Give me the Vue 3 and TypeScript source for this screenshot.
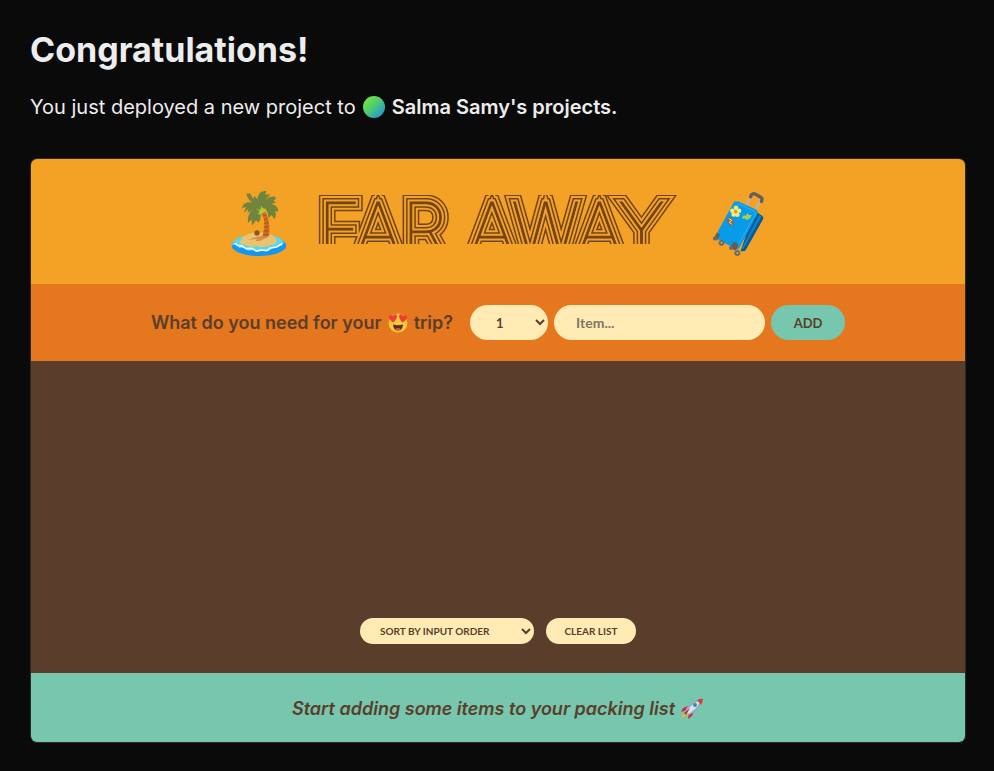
<script setup lang="ts">
import { ref } from 'vue'

interface Layer {
  width: number
  tone: 'ink' | 'ground'
}

// Concentric outlines, widest first, that give the title its neon-tube stripes.
const layers: Layer[] = [
  { width: 15, tone: 'ink' },
  { width: 12, tone: 'ground' },
  { width: 8, tone: 'ink' },
  { width: 5, tone: 'ground' },
  { width: 1, tone: 'ink' },
]

const quantities: number[] = Array.from({ length: 20 }, (_, i) => i + 1)
const quantity = ref<number>(1)
const description = ref<string>('')
const sortBy = ref<string>('input')
</script>

<template>
  <main class="page">
    <h1 class="title">Congratulations!</h1>
    <p class="lead">
      You just deployed a new project to
      <span class="avatar" aria-hidden="true"></span>
      <strong>Salma Samy's projects.</strong>
    </p>

    <section class="preview">
      <header class="banner">
        <svg class="palm" viewBox="24 18 166 198" aria-hidden="true">
          <ellipse cx="107" cy="182" rx="82" ry="31" fill="#1697ee" />
          <path d="M29 174q5-16 33-21h92q24 7 28 21l-9 8q-5-2-9 5l-16 3-10 7-19-2-12 5-14-5-18 2-12-8-16-1-9-8-14 1z" fill="#55d6f5" />
          <path d="M36 176q7 8 19 6l13 9 17-1 14 8 14-3 17 2 11-8 19-3 15-9" fill="none" stroke="#eefcff" stroke-width="5" stroke-linecap="round" />
          <path d="M49 171q8-19 29-25 18-8 43-2 37 3 40 25-2 9-21 12-20 10-40 3-24 4-34-5-15 0-17-8z" fill="#e9c36d" />
          <path d="M72 164l43-12 22 3-27 12-14 2 7-7z" fill="#d58b4a" />
          <path d="M113 83q18 27 5 70 11 5 19 0 5-43-10-71z" fill="#cf6c25" />
          <path d="M119 93l11-3m-8 14 12-3m-12 14 14-2m-15 13 15-1m-16 13h16m-18 11h18" stroke="#a9541d" stroke-width="3" />
          <circle cx="101" cy="144" r="8" fill="#8d5425" />
          <path d="M111 75C96 50 75 48 62 57q-4 5-7 13l13-4-7 18 14-12-2 12 14-9q-16 13-13 38l11-9 1 18 12-16 8 7q10-15 5-38l7-7q11 3 14 12l4 19 9-9 8 13q8-14 2-26l10 3q0-19-22-24l15-2-7-7 8-8q-13-11-31 5l13-16-15 1 3-11q-24-2-27 25l-9-11-3 10-10-17q-7 2-11 0 3 23 31 37z" fill="#71843b" />
          <path d="M97 70l13 5 6-15 1 15 12-5-8 11q-8 11-17 6l5-8z" fill="#a4cf35" />
        </svg>

        <h2 class="brand" aria-label="Far Away">
          <svg class="brand-art" viewBox="0 0 364 50" aria-hidden="true">
            <text
              v-for="layer in layers"
              :key="layer.width"
              x="1"
              y="61"
              :class="layer.tone"
              :stroke-width="layer.width"
            >FAR AWAY</text>
            <!-- Trims square the tube ends off along the top and the foot of the word. -->
            <rect class="trim" x="-10" y="-35" width="390" height="35" />
            <rect class="trim" x="-10" y="49" width="390" height="30" />
          </svg>
        </h2>

        <svg class="suitcase" viewBox="32 16 160 200" aria-hidden="true">
          <path d="M137 58l16-27m14 38 15-27" stroke="#b8b5ad" stroke-width="7" />
          <path d="M150 34q3-12 14-9l16 9q8 4 3 14" fill="none" stroke="#5f605f" stroke-width="10" stroke-linecap="round" />
          <path d="M162 75l23 16q6 4 2 12l-51 91q-6 8-16 3z" fill="#075b91" />
          <path d="M177 87l6 6-55 99-7 1z" fill="#0c83c9" />
          <path d="M111 46l55 26q9 5 5 14l-55 102q-5 8-13 3l-54-30q-7-5-3-13l53-97q4-7 12-2z" fill="#079be8" />
          <path d="M112 54l49 23q6 4 3 10l-53 96" fill="none" stroke="#24b2f5" stroke-width="3" />
          <g fill="#f5eb75">
            <circle cx="106" cy="67" r="7" /><circle cx="115" cy="76" r="7" />
            <circle cx="110" cy="88" r="7" /><circle cx="99" cy="87" r="7" />
            <circle cx="95" cy="76" r="7" />
          </g>
          <circle cx="105" cy="79" r="5" fill="#f09235" />
          <path d="M126 91l11-1 3-8 5 7 9 0-6 10-9 5-7-5-7 1z" fill="#a5cf57" />
          <ellipse cx="89" cy="108" rx="9" ry="13" fill="#96643f" transform="rotate(-25 89 108)" />
          <path d="M84 100l10 5-9 6 9 6" fill="none" stroke="#eadbbd" stroke-width="3" />
          <path d="M48 142l9 7-8 17-11-4zm52 27 14 9-9 19-18-9z" fill="#665c54" />
          <g fill="#596a70" stroke="#84715a" stroke-width="3">
            <circle cx="42" cy="160" r="5" /><circle cx="62" cy="173" r="8" />
            <circle cx="91" cy="189" r="5" /><circle cx="110" cy="204" r="8" />
          </g>
          <circle cx="62" cy="173" r="3" fill="#c1b9a9" />
          <circle cx="110" cy="204" r="3" fill="#c1b9a9" />
        </svg>
      </header>

      <form class="add-form" @submit.prevent>
        <h3 class="question">
          What do you need for your
          <svg class="face" viewBox="0 0 20 20" aria-hidden="true">
            <circle cx="10" cy="10" r="9.5" fill="#fbc536" />
            <path d="M5.5 9.5Q0 6 1 3.500 2 1.500 4.800 3 7-.2 8.800 2.300 9.600 5 5.500 9.500zM14.500 9.500Q20 6 19 3.500 18 1.500 15.200 3 13-.2 11.200 2.300 10.400 5 14.500 9.500z" fill="#ec3f35" />
            <path d="M5 11.500q5 1.600 10 0-.5 6-5 6t-5-6z" fill="#54301d" />
            <path d="M7 16q3-2 6 0-3 2.500-6 0z" fill="#ef5144" />
          </svg>
          trip?
        </h3>
        <div class="fields">
          <select v-model="quantity" class="pill quantity" aria-label="Quantity">
            <option v-for="n in quantities" :key="n" :value="n">{{ n }}</option>
          </select>
          <input v-model="description" class="pill item" type="text" placeholder="Item..." aria-label="Item" />
          <button class="pill add" type="submit">ADD</button>
        </div>
      </form>

      <div class="list">
        <div class="actions">
          <select v-model="sortBy" class="pill small sort" aria-label="Sort items">
            <option value="input">SORT BY INPUT ORDER</option>
            <option value="description">SORT BY DESCRIPTION</option>
            <option value="packed">SORT BY PACKED STATUS</option>
          </select>
          <button class="pill small clear" type="button">CLEAR LIST</button>
        </div>
      </div>

      <footer class="stats">
        <em>Start adding some items to your packing list</em>
        <svg class="rocket" viewBox="0 0 24 22" aria-hidden="true">
          <path d="M8 8L3 10 1 14l6-2zm6 5-2 5-4 3 1-7z" fill="#c92f3f" />
          <path d="M5 14l-4 6 7-3z" fill="#ffb13d" />
          <path d="M5 13Q8 5 18 2l3 3q-4 9-12 12z" fill="#95aabd" />
          <path d="M6 14Q11 6 19 3l1 1q-4 8-12 12z" fill="#d8e2ea" />
          <path d="M17 2q4-2 6-1 0 3-2 6z" fill="#d83c43" />
          <circle cx="15" cy="7" r="2" fill="#3b87b4" />
          <path d="M4 15l6-5-4 7z" fill="#b72f40" />
        </svg>
      </footer>
    </section>
  </main>
</template>

<style>
body {
  margin: 0;
  background: #0a0a0a;
}
</style>

<style scoped>
.page {
  padding: 28px 28px 28px 30px;
  color: #ededed;
  font-family: Inter, "Liberation Sans", sans-serif;
}

.title {
  margin: 0;
  font-size: 34px;
  font-weight: 700;
  line-height: 44px;
}

.lead {
  display: flex;
  align-items: center;
  gap: 7px;
  margin: 20px 0 36px;
  font-size: 20px;
  line-height: 30px;
}

.lead strong {
  font-weight: 600;
}

.avatar {
  width: 22px;
  height: 22px;
  border-radius: 50%;
  background: linear-gradient(135deg, #7bee28, #50cd6e 45%, #1688e8);
}

.preview {
  overflow: hidden;
  border: 1px solid #292929;
  border-radius: 7px;
  color: #5a3e2b;
  font-family: Lato, "Open Sans", sans-serif;
  font-weight: 700;
}

.banner {
  display: flex;
  align-items: flex-start;
  justify-content: center;
  gap: 30px;
  padding: 32px 30px 27px;
  background: #f4a226;
}

.palm {
  width: 56px;
  height: 66px;
}

.suitcase {
  width: 54px;
  height: 66px;
}

.brand {
  display: flex;
  margin: 0;
  padding-top: 4px;
}

.brand-art {
  width: 364px;
  height: 50px;
  overflow: visible;
  font-family: Inter, sans-serif;
  font-size: 74px;
  font-weight: 100;
}

.ink {
  fill: #70431a;
  stroke: #70431a;
}

.ground {
  fill: #f4a226;
  stroke: #f4a226;
}

.trim {
  fill: #f4a226;
}

.add-form {
  display: flex;
  align-items: center;
  justify-content: center;
  gap: 17px;
  padding: 20px;
  background: #e5771f;
}

.question {
  display: flex;
  align-items: center;
  gap: 6px;
  margin: 0;
  font-family: Inter, sans-serif;
  font-size: 18px;
  font-weight: 600;
  line-height: 37px;
}

.face {
  width: 20px;
  height: 20px;
}

.fields {
  display: flex;
  align-items: center;
  gap: 6px;
}

.pill {
  box-sizing: border-box;
  height: 35px;
  padding: 0 22px;
  border: 0;
  border-radius: 18px;
  background: #ffebb3;
  color: #5a3e2b;
  font: inherit;
  font-size: 13px;
}

.quantity {
  width: 78px;
}

.item {
  width: 211px;
  font-size: 14px;
}

.item::placeholder {
  color: #817767;
}

.add {
  width: 74px;
  padding: 0;
  background: #76c7ad;
}

.list {
  display: flex;
  flex-direction: column;
  justify-content: flex-end;
  box-sizing: border-box;
  min-height: 312px;
  padding: 29px;
  background: #5a3e2b;
}

.actions {
  display: flex;
  align-items: center;
  justify-content: center;
  gap: 12px;
}

.small {
  height: 26px;
  padding: 0 16px;
  font-size: 10px;
}

.sort {
  width: 174px;
}

.clear {
  width: 90px;
}

.stats {
  display: flex;
  align-items: center;
  justify-content: center;
  gap: 5px;
  padding: 21px 20px 19px;
  background: #76c7ad;
  font-family: Inter, sans-serif;
  font-size: 18px;
  font-weight: 600;
  line-height: 29px;
}

.rocket {
  width: 24px;
  height: 22px;
}
</style>
